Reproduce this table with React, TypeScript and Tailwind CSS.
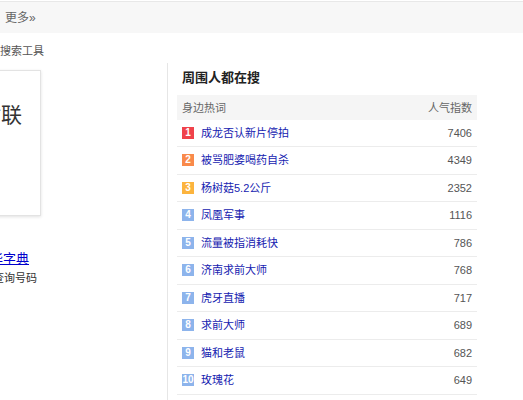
const hotWords = [
  { rank: 1, word: "成龙否认新片停拍", score: 7406 },
  { rank: 2, word: "被骂肥婆喝药自杀", score: 4349 },
  { rank: 3, word: "杨树菇5.2公斤", score: 2352 },
  { rank: 4, word: "凤凰军事", score: 1116 },
  { rank: 5, word: "流量被指消耗快", score: 786 },
  { rank: 6, word: "济南求前大师", score: 768 },
  { rank: 7, word: "虎牙直播", score: 717 },
  { rank: 8, word: "求前大师", score: 689 },
  { rank: 9, word: "猫和老鼠", score: 682 },
  { rank: 10, word: "玫瑰花", score: 649 },
];

const badgeColor = (rank: number) => {
  if (rank === 1) return "bg-[#f0434b]";
  if (rank === 2) return "bg-[#f98a4b]";
  if (rank === 3) return "bg-[#fcb43e]";
  return "bg-[#8db4ec]";
};

export default function App() {
  return (
    <div
      className="w-[523px] h-[400px] overflow-hidden bg-white"
      style={{ fontFamily: '"Liberation Sans", "Noto Sans CJK SC", sans-serif' }}
    >
      {/* top bar */}
      <div className="mt-px h-[32px] border-t border-[#e8e8e8] bg-[#f7f7f7] flex items-center pl-[5px] text-[12px] text-[#666]">
        更多»
      </div>

      <div className="flex">
        {/* left column, cropped by the window edge */}
        <div className="w-[167px] shrink-0">
          <div className="mt-[10px] text-[11px] leading-[16px] text-[#555]">搜索工具</div>
          <div className="mt-[11px] -ml-[200px] w-[241px] h-[146px] border border-[#e3e3e3] shadow-[0_1px_3px_rgba(0,0,0,0.12)] bg-white pt-[33px] pl-[179px]">
            <span className="text-[21px] leading-none text-[#333]">对联</span>
          </div>
          <a href="#" className="block mt-[34px] -ml-[23px] text-[13px] leading-[18px] text-[#0000cc] underline">
            新华字典
          </a>
          <div className="mt-[2px] -ml-[7px] text-[11px] leading-[16px] text-[#333]">查询号码</div>
        </div>

        {/* nearby searches */}
        <div className="mt-[30px] border-l border-[#e6e6e6] pl-[9px] pt-[6px] h-[400px]">
          <div className="pl-[5px] text-[13px] leading-[18px] font-bold text-[#222]">周围人都在搜</div>
          <div className="mt-[8px] w-[300px]">
            <div className="h-[24.5px] bg-[#f5f5f5] flex items-center justify-between px-[5px] pt-[2px] text-[11px] text-[#666]">
              <span>身边热词</span>
              <span>人气指数</span>
            </div>
            {hotWords.map((item) => (
              <div
                key={item.rank}
                className="h-[27.5px] border-b border-[#ececec] flex items-center px-[5px] text-[11px]"
              >
                <span
                  className={`${badgeColor(item.rank)} w-[12px] h-[12px] flex items-center justify-center text-white text-[10px] leading-none font-bold`}
                >
                  {item.rank}
                </span>
                <a href="#" className="ml-[7px] text-[#1622b0]">
                  {item.word}
                </a>
                <span className="ml-auto text-[#555]">{item.score}</span>
              </div>
            ))}
          </div>
        </div>
      </div>
    </div>
  );
}
